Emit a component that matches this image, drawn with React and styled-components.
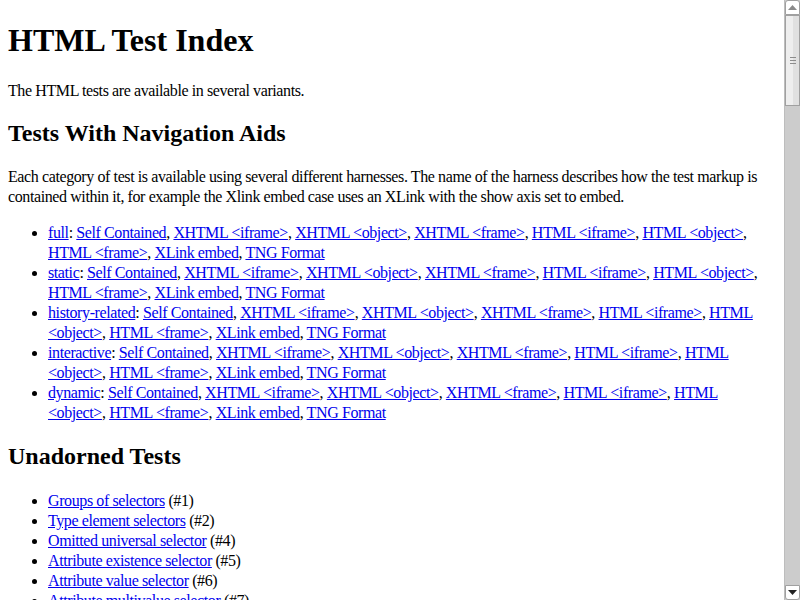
import React from "react";
import styled, { createGlobalStyle } from "styled-components";

const GlobalStyle = createGlobalStyle`
	html, body {
		margin: 0;
		padding: 0;
		background: #fff;
	}
	body {
		font-family: "Liberation Serif", "Times New Roman", serif;
		font-size: 16px;
		color: #000;
	}
`;

const Window = styled.div`
	display: flex;
	height: 600px;
	overflow: hidden;
`;

const Page = styled.div`
	flex: 1;
	min-width: 0;
	padding: 8px;
	overflow: hidden;
	letter-spacing: -0.4px;
`;

const Scrollbar = styled.div`
	width: 15px;
	display: flex;
	flex-direction: column;
	background: #cccccc;
	border-left: 1px solid #bdbdbd;
`;

const ArrowButton = styled.div`
	height: 15px;
	box-sizing: border-box;
	background: #fff;
	border: 1px solid #a0a0a0;
	border-radius: ${(p) => (p.$down ? "0 0 3px 3px" : "3px 3px 0 0")};
	display: flex;
	align-items: center;
	justify-content: center;
`;

const Thumb = styled.div`
	height: 91px;
	box-sizing: border-box;
	border: 1px solid #a0a0a0;
	background: linear-gradient(to right, #eeeeee 0 55%, #e0e0e0 55% 100%);
	display: flex;
	align-items: center;
	justify-content: center;
`;

const Grip = styled.div`
	width: 6px;
	height: 7px;
	background: repeating-linear-gradient(
		to bottom,
		#8c8c8c 0 1px,
		transparent 1px 3px
	);
`;

const Track = styled.div`
	flex: 1;
`;

const Title = styled.h1`
	font-size: 32px;
	font-weight: bold;
	letter-spacing: 0;
	margin: 14px 0 22px;
`;

const Section = styled.h2`
	font-size: 24px;
	font-weight: bold;
	letter-spacing: 0;
	margin: ${(p) => p.$margin};
`;

const Para = styled.p`
	line-height: 20px;
	margin: 16px 0;
`;

const List = styled.ul`
	list-style: disc;
	padding-left: 40px;
	margin: 16px 0;
`;

const Item = styled.li`
	line-height: 20px;
`;

const A = styled.a`
	color: #0000ee;
	text-decoration: underline;
`;

const harnesses = [
	"Self Contained",
	"XHTML <iframe>",
	"XHTML <object>",
	"XHTML <frame>",
	"HTML <iframe>",
	"HTML <object>",
	"HTML <frame>",
	"XLink embed",
	"TNG Format",
];

const categories = ["full", "static", "history-related", "interactive", "dynamic"];

const tests = [
	["Groups of selectors", "1"],
	["Type element selectors", "2"],
	["Omitted universal selector", "4"],
	["Attribute existence selector", "5"],
	["Attribute value selector", "6"],
	["Attribute multivalue selector", "7"],
	["Attribute value selectors (hyphen-separated attributes)", "7b"],
	["Attribute value selectors (hyphen-separated attributes)", "8"],
	["Substring matching attribute selector (beginning)", "9"],
	["Substring matching attribute selector (end)", "10"],
	["Substring matching attribute selector (contains)", "11"],
	["Class selectors", "13"],
	["More than one class selector", "14"],
	["ID selectors", "15"],
	[":link pseudo-class", "16"],
	[":visited pseudo-class", "17"],
	[":hover pseudo-class", "18"],
	[":focus pseudo-class", "19"],
	[":lang() pseudo-class", "20"],
];

function UpArrow() {
	return (
		<svg width="9" height="5" viewBox="0 0 9 5">
			<path d="M0 5h9L4.5 0z" fill="#8a8a8a" />
		</svg>
	);
}

function DownArrow() {
	return (
		<svg width="9" height="5" viewBox="0 0 9 5">
			<path d="M0 0h9L4.5 5z" fill="#222" />
		</svg>
	);
}

function CategoryItem({ name }) {
	return (
		<Item>
			<A href="#">{name}</A>:{" "}
			{harnesses.map((h, i) => (
				<React.Fragment key={h}>
					<A href="#">{h}</A>
					{i < harnesses.length - 1 ? ", " : ""}
				</React.Fragment>
			))}
		</Item>
	);
}

export default function App() {
	return (
		<>
			<GlobalStyle />
			<Window>
				<Page>
					<Title>HTML Test Index</Title>
					<Para>The HTML tests are available in several variants.</Para>
					<Section $margin="19px 0 20px">Tests With Navigation Aids</Section>
					<Para>
						Each category of test is available using several different harnesses. The name of
						the harness describes how the test markup is contained within it, for example the
						Xlink embed case uses an XLink with the show axis set to embed.
					</Para>
					<List>
						{categories.map((c) => (
							<CategoryItem key={c} name={c} />
						))}
					</List>
					<Section $margin="20px 0 21px">Unadorned Tests</Section>
					<List>
						{tests.map(([label, num], i) => (
							<Item key={i}>
								<A href="#">{label}</A> (#{num})
							</Item>
						))}
					</List>
				</Page>
				<Scrollbar>
					<ArrowButton>
						<UpArrow />
					</ArrowButton>
					<Thumb>
						<Grip />
					</Thumb>
					<Track />
					<ArrowButton $down>
						<DownArrow />
					</ArrowButton>
				</Scrollbar>
			</Window>
		</>
	);
}
